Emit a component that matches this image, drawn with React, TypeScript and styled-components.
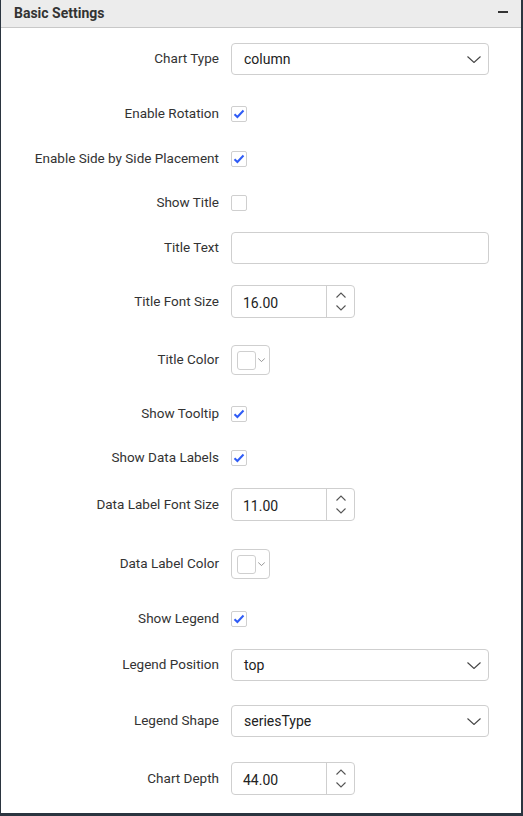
import styled, { createGlobalStyle } from 'styled-components';

const GlobalStyle = createGlobalStyle`
  html, body {
    margin: 0;
    padding: 0;
    background: #ffffff;
  }
  * {
    box-sizing: border-box;
  }
`;

type Field =
  | { label: string; kind: 'select'; value: string; gap: number }
  | { label: string; kind: 'check'; checked: boolean; gap: number }
  | { label: string; kind: 'text'; gap: number }
  | { label: string; kind: 'number'; value: string; gap: number }
  | { label: string; kind: 'color'; gap: number };

const fields: Field[] = [
  { label: 'Chart Type', kind: 'select', value: 'column', gap: 15 },
  { label: 'Enable Rotation', kind: 'check', checked: true, gap: 23 },
  { label: 'Enable Side by Side Placement', kind: 'check', checked: true, gap: 13 },
  { label: 'Show Title', kind: 'check', checked: false, gap: 12 },
  { label: 'Title Text', kind: 'text', gap: 13 },
  { label: 'Title Font Size', kind: 'number', value: '16.00', gap: 21 },
  { label: 'Title Color', kind: 'color', gap: 26 },
  { label: 'Show Tooltip', kind: 'check', checked: true, gap: 22 },
  { label: 'Show Data Labels', kind: 'check', checked: true, gap: 12 },
  { label: 'Data Label Font Size', kind: 'number', value: '11.00', gap: 14 },
  { label: 'Data Label Color', kind: 'color', gap: 27 },
  { label: 'Show Legend', kind: 'check', checked: true, gap: 23 },
  { label: 'Legend Position', kind: 'select', value: 'top', gap: 14 },
  { label: 'Legend Shape', kind: 'select', value: 'seriesType', gap: 24 },
  { label: 'Chart Depth', kind: 'number', value: '44.00', gap: 25 },
];

const Chevron = ({ w = 14, h = 7 }: { w?: number; h?: number }) => (
  <svg width={w} height={h} viewBox="0 0 14 7" fill="none">
    <path d="M0.5 0.5L7 6.5L13.5 0.5" stroke="#444" strokeWidth="1.1" />
  </svg>
);

const Arrow = ({ up }: { up?: boolean }) => (
  <svg width="10" height="6" viewBox="0 0 10 6" fill="none">
    <path
      d={up ? 'M0.5 5.5L5 1L9.5 5.5' : 'M0.5 0.5L5 5L9.5 0.5'}
      stroke="#555"
      strokeWidth="1.1"
    />
  </svg>
);

const Check = () => (
  <svg width="12" height="10" viewBox="0 0 12 10" fill="none">
    <path d="M1.5 5.2L4.4 8L10.5 1.5" stroke="#2f5cf6" strokeWidth="2" />
  </svg>
);

function Control({ field }: { field: Field }) {
  switch (field.kind) {
    case 'select':
      return (
        <Select>
          <span>{field.value}</span>
          <Chevron />
        </Select>
      );
    case 'check':
      return <CheckBox>{field.checked && <Check />}</CheckBox>;
    case 'text':
      return <TextBox />;
    case 'number':
      return (
        <Numeric>
          <NumValue>{field.value}</NumValue>
          <Spinner>
            <Arrow up />
            <Arrow />
          </Spinner>
        </Numeric>
      );
    case 'color':
      return (
        <ColorPicker>
          <Swatch />
          <Chevron w={7} h={4} />
        </ColorPicker>
      );
  }
}

export default function App() {
  return (
    <>
      <GlobalStyle />
      <Panel>
        <Header>
          <Title>Basic Settings</Title>
          <Minus />
        </Header>
        <Body>
          {fields.map((f) => (
            <Row key={f.label} $gap={f.gap}>
              <Label>{f.label}</Label>
              <Control field={f} />
            </Row>
          ))}
        </Body>
      </Panel>
    </>
  );
}

const Panel = styled.div`
  width: 523px;
  height: 816px;
  background: #ffffff;
  border-left: 1px solid #2b3540;
  border-right: 2px solid #2b3540;
  border-bottom: 3px solid #2b3540;
  font-family: Roboto, 'Liberation Sans', sans-serif;
  color: #333333;
  display: flex;
  flex-direction: column;
`;

const Header = styled.div`
  height: 28px;
  background: #ececec;
  border-bottom: 1px solid #c8c8c8;
  display: flex;
  align-items: center;
  justify-content: space-between;
  padding: 0 13px 0 13px;
`;

const Title = styled.div`
  font-size: 14px;
  font-weight: 700;
  color: #333333;
  margin-top: -2px;
`;

const Minus = styled.div`
  width: 10px;
  height: 1.5px;
  background: #333333;
  margin-top: -3px;
`;

const Body = styled.div`
  display: flex;
  flex-direction: column;
`;

const Row = styled.div<{ $gap: number }>`
  display: grid;
  grid-template-columns: 218px auto;
  column-gap: 12px;
  align-items: center;
  justify-items: start;
  min-height: 32px;
  margin-top: ${(p) => p.$gap}px;
`;

const Label = styled.div`
  justify-self: end;
  font-size: 13.5px;
  color: #333333;
  margin-top: -2px;
`;

const Select = styled.div`
  width: 258px;
  height: 32px;
  border: 1px solid #cfcfcf;
  border-radius: 4px;
  display: flex;
  align-items: center;
  justify-content: space-between;
  padding: 0 7px 0 12px;
  font-size: 14px;
  color: #222222;
`;

const TextBox = styled.div`
  width: 258px;
  height: 32px;
  border: 1px solid #cfcfcf;
  border-radius: 4px;
`;

const CheckBox = styled.div`
  width: 16px;
  height: 16px;
  border: 1px solid #cfcfcf;
  border-radius: 2px;
  display: flex;
  align-items: center;
  justify-content: center;
`;

const Numeric = styled.div`
  width: 124px;
  height: 33px;
  border: 1px solid #cfcfcf;
  border-radius: 4px;
  display: flex;
  align-items: stretch;
`;

const NumValue = styled.div`
  flex: 1;
  display: flex;
  align-items: center;
  padding-left: 11px;
  padding-top: 2px;
  font-size: 14px;
  color: #222222;
  border-right: 1px solid #cfcfcf;
`;

const Spinner = styled.div`
  width: 27px;
  display: flex;
  flex-direction: column;
  align-items: center;
  justify-content: center;
  gap: 7px;
`;

const ColorPicker = styled.div`
  width: 39px;
  height: 30px;
  border: 1px solid #cfcfcf;
  border-radius: 4px;
  display: flex;
  align-items: center;
  padding-left: 5px;
  gap: 2px;
`;

const Swatch = styled.div`
  width: 19px;
  height: 19px;
  border: 1px solid #cfcfcf;
  border-radius: 3px;
  background: #ffffff;
`;
